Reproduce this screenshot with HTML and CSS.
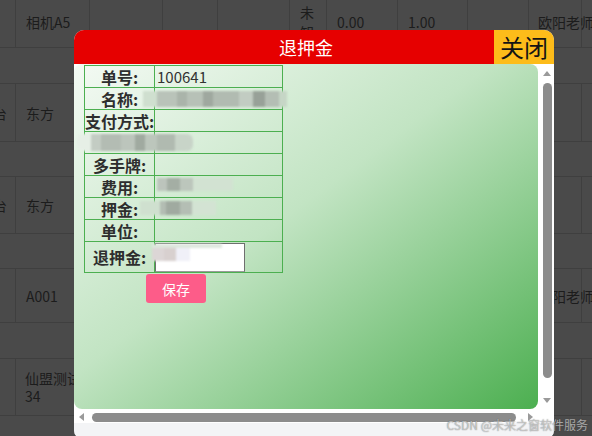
FILE: index.html
```html
<!DOCTYPE html>
<html lang="zh">
<head>
<meta charset="utf-8">
<title>退押金</title>
<link rel="stylesheet" href="styles.css">
</head>
<body>
<div class="page">
  <div class="row r0">
    <div class="c"></div><div class="c">相机A5</div><div class="c"></div><div class="c"></div><div class="c"></div><div class="c">未知</div><div class="c">0.00</div><div class="c">1.00</div><div class="c"></div><div class="c nw">欧阳老师</div><div class="c"></div>
  </div>
  <div class="spacer s36"></div>
  <div class="row r58">
    <div class="c cut">台</div><div class="c">东方</div><div class="c"></div><div class="c"></div><div class="c"></div><div class="c"></div><div class="c"></div><div class="c"></div><div class="c"></div><div class="c"></div><div class="c"></div>
  </div>
  <div class="spacer s35"></div>
  <div class="row r57">
    <div class="c cut">台</div><div class="c">东方</div><div class="c"></div><div class="c"></div><div class="c"></div><div class="c"></div><div class="c"></div><div class="c"></div><div class="c"></div><div class="c"></div><div class="c"></div>
  </div>
  <div class="spacer s35"></div>
  <div class="row r54">
    <div class="c"></div><div class="c">A001</div><div class="c"></div><div class="c"></div><div class="c"></div><div class="c"></div><div class="c"></div><div class="c"></div><div class="c"></div><div class="c nw">欧阳老师</div><div class="c"></div>
  </div>
  <div class="spacer s36"></div>
  <div class="row r57">
    <div class="c"></div><div class="c nw">仙盟测试<br>34</div><div class="c"></div><div class="c"></div><div class="c"></div><div class="c"></div><div class="c"></div><div class="c"></div><div class="c"></div><div class="c"></div><div class="c"></div>
  </div>
  <div class="spacer s40"></div>
</div>

<div class="modal">
  <div class="head">
    <div class="title">退押金</div>
    <div class="close">关闭</div>
  </div>
  <div class="frame">
    <div class="content">
      <table class="form">
        <tr><th>单号:</th><td>100641</td></tr>
        <tr><th>名称:</th><td></td></tr>
        <tr><th>支付方式:</th><td></td></tr>
        <tr><th></th><td></td></tr>
        <tr><th>多手牌:</th><td></td></tr>
        <tr><th>费用:</th><td></td></tr>
        <tr><th>押金:</th><td></td></tr>
        <tr><th>单位:</th><td></td></tr>
        <tr class="last"><th>退押金:</th><td><input class="refund" type="text"></td></tr>
      </table>
      <button class="save">保存</button>
      <div class="blur b-name"></div>
      <div class="blur b-label"></div>
      <div class="blur b-fee"></div>
      <div class="blur b-dep"></div>
      <div class="blur b-ret"></div>
    </div>
    <div class="gap"></div>
    <div class="vbar">
      <div class="arr-up"></div>
      <div class="vthumb"></div>
      <div class="arr-down"></div>
    </div>
    <div class="hbar">
      <div class="arr-left"></div>
      <div class="hthumb"></div>
      <div class="arr-right"></div>
    </div>
    <div class="corner"></div>
  </div>
  <div class="foot"></div>
</div>

<div class="watermark">CSDN @未来之窗软件服务</div>
</body>
</html>
```

FILE: styles.css
```css
html, body {
  margin: 0;
  padding: 0;
  width: 592px;
  height: 436px;
  overflow: hidden;
  background: #4a4a4a;
  font-family: "Noto Sans CJK SC", "Noto Sans", sans-serif;
}

.page {
  margin-top: -4px;
  color: #1c1c1c;
  font-size: 14px;
  line-height: 18px;
}

.row {
  display: grid;
  grid-template-columns: 16px 74px 73px 55px 72px 37px 71px 70px 61px 53px 1fr;
  border-bottom: 1px solid #3f3f3f;
  box-sizing: border-box;
}

.row .c {
  border-right: 1px solid #3f3f3f;
  padding: 0 0 0 10px;
  display: flex;
  align-items: center;
  overflow: visible;
  min-width: 0;
  word-break: break-all;
}

.row .c.nw {
  white-space: nowrap;
  padding-left: 9px;
}

.row .c.cut {
  padding-left: 0;
  text-indent: -7px;
  overflow: hidden;
}

.r0 { height: 52px; line-height: 20px; }
.r58 { height: 58px; }
.r57 { height: 57px; }
.r54 { height: 54px; }

.spacer {
  border-bottom: 1px solid #3f3f3f;
  box-sizing: border-box;
}
.s36 { height: 36px; }
.s35 { height: 35px; }
.s40 { height: 40px; }

/* modal */
.modal {
  position: absolute;
  left: 74px;
  top: 30px;
  width: 480px;
  height: 410px;
  border-radius: 10px;
  overflow: hidden;
  background: #f3f4f6;
  display: flex;
  flex-direction: column;
}

.head {
  display: flex;
  height: 34px;
}

.title {
  flex: 1;
  background: #e60000;
  color: #fff;
  font-size: 18px;
  line-height: 34px;
  text-align: center;
  padding-left: 44px;
}

.close {
  width: 60px;
  background: #fdbc1a;
  color: #141414;
  font-size: 24px;
  line-height: 34px;
  text-align: center;
}

.frame {
  background: #fff;
  display: grid;
  grid-template-columns: 464px 2px 14px;
  grid-template-rows: 345px 14px;
}

.content {
  grid-column: 1;
  grid-row: 1;
  position: relative;
  border-radius: 8px;
  overflow: hidden;
  background: linear-gradient(to bottom right, #f4faf4 0%, #c2e4c3 45%, #4caf50 100%);
}

.gap { grid-column: 2; grid-row: 1; }

.form {
  border-collapse: collapse;
  table-layout: fixed;
  width: 199px;
  margin: 1px 0 0 10px;
}

.form th, .form td {
  border: 1px solid #4caf50;
  height: 21px;
  padding: 0;
  line-height: 20px;
}

.form th {
  width: 69px;
  font-size: 16px;
  font-weight: bold;
  color: #2e2e2e;
  text-align: center;
  white-space: nowrap;
}

.form td {
  font-size: 15px;
  color: #333;
  padding-left: 2px;
}

.form tr.last th, .form tr.last td {
  height: 30px;
}

.form tr.last td { padding-left: 0; }

.refund {
  display: block;
  width: 90px;
  height: 29px;
  box-sizing: border-box;
  margin: 0;
  border: 1px solid #6f6f6f;
  border-bottom-color: #9a9a9a;
  background: #fff;
  padding: 0;
}

.save {
  display: block;
  margin: 1px 0 0 72px;
  width: 60px;
  height: 29px;
  border: none;
  border-radius: 3px;
  background: #fd5c89;
  color: #fff;
  font-family: "Noto Sans CJK SC", sans-serif;
  font-size: 14px;
  padding: 0;
}

/* blurred mosaics */
.blur {
  position: absolute;
  filter: blur(1px);
}

.b-name {
  left: 69px;
  top: 27px;
  width: 144px;
  height: 16px;
  background:
    linear-gradient(90deg, #cfdfcf 0 14px, #b9c3b9 14px 34px, #aab4aa 34px 44px, #b7c1b7 44px 60px, #9fa89f 60px 70px, #b1bbb1 70px 96px, #c2ccc2 96px 110px, #98a198 110px 122px, #b4beb4 122px 136px, #c6d6c6 136px 144px);
}

.b-label {
  left: 3px;
  top: 70px;
  width: 116px;
  height: 17px;
  border-radius: 6px;
  background:
    linear-gradient(90deg, #e6efe6 0 14px, #c3ccc3 14px 24px, #b3bcb3 24px 44px, #bcc5bc 44px 58px, #a0aaa0 58px 68px, #bcc6bc 68px 80px, #b0bab0 80px 98px, #c8d4c8 98px 116px);
}

.b-fee {
  left: 83px;
  top: 114px;
  width: 76px;
  height: 13px;
  background:
    linear-gradient(90deg, #bcc4bc 0 10px, #a4aea4 10px 23px, #bcc6bc 23px 36px, #d2e2d2 36px 76px);
}

.b-dep {
  left: 66px;
  top: 137px;
  width: 76px;
  height: 14px;
  background:
    linear-gradient(90deg, #cfe0cf 0 20px, #b3bdb3 20px 26px, #a0aaa0 26px 40px, #b4beb4 40px 52px, #d3e3d3 52px 76px);
}

.b-ret {
  left: 78px;
  top: 180px;
  width: 70px;
  height: 17px;
  background:
    linear-gradient(180deg, #dde7dd 0 4px, transparent 4px),
    linear-gradient(90deg, #dcd6d6 0 12px, #d8d0cf 12px 24px, #f0f0f8 24px 38px, transparent 38px);
}

/* scrollbars */
.vbar {
  grid-column: 3;
  grid-row: 1;
  display: flex;
  flex-direction: column;
  align-items: center;
}

.arr-up {
  margin-top: 7px;
  width: 0;
  height: 0;
  border-left: 4px solid transparent;
  border-right: 4px solid transparent;
  border-bottom: 5px solid #9a9a9a;
}

.vthumb {
  margin-top: 7px;
  width: 9px;
  height: 295px;
  border-radius: 5px;
  background: #8c8c8c;
}

.arr-down {
  margin-top: 20px;
  width: 0;
  height: 0;
  border-left: 4px solid transparent;
  border-right: 4px solid transparent;
  border-top: 5px solid #9a9a9a;
}

.hbar {
  grid-column: 1 / span 2;
  grid-row: 2;
  display: flex;
  align-items: flex-start;
}

.arr-left {
  margin: 4px 0 0 5px;
  width: 0;
  height: 0;
  border-top: 4px solid transparent;
  border-bottom: 4px solid transparent;
  border-right: 5px solid #9a9a9a;
}

.hthumb {
  margin: 4px 0 0 8px;
  width: 424px;
  height: 9px;
  border-radius: 5px;
  background: #8c8c8c;
}

.arr-right {
  margin: 4px 0 0 12px;
  width: 0;
  height: 0;
  border-top: 4px solid transparent;
  border-bottom: 4px solid transparent;
  border-left: 5px solid #9a9a9a;
}

.corner { grid-column: 3; grid-row: 2; }

.foot {
  flex: 1;
  background: #f3f4f6;
}

.watermark {
  position: absolute;
  right: 4px;
  bottom: 4px;
  font-size: 12px;
  line-height: 14px;
  color: rgba(255, 255, 255, 0.55);
  text-shadow: 0 0 1px rgba(60, 60, 60, 0.8);
  white-space: nowrap;
}
```
